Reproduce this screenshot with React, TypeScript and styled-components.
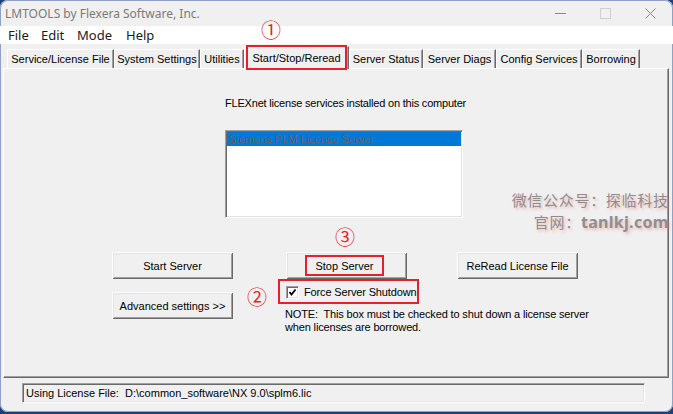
import React from "react";
import styled, { createGlobalStyle } from "styled-components";

const Global = createGlobalStyle`
  html, body { margin: 0; padding: 0; background: #1d3f7a; }
  body {
    width: 673px; height: 414px; overflow: hidden;
    font-family: "Liberation Sans", Arial, sans-serif;
  }
`;

const Window = styled.div`
  position: relative;
  width: 673px;
  height: 412px;
  box-sizing: border-box;
  background: #f0f0f0;
  border-radius: 8px;
  box-shadow: inset 0 0 0 1px #8ea2c4;
  overflow: hidden;
  display: flex;
  flex-direction: column;
  font-family: "Liberation Sans", Arial, sans-serif;
  font-size: 11px;
  color: #000;
`;

const TitleBar = styled.div`
  height: 26px;
  display: flex;
  align-items: center;
  padding-left: 5px;
  font-family: "Noto Sans", sans-serif;
  font-size: 12px;
  color: #7a7a7a;
`;

const TitleText = styled.span`
  flex: 1;
`;

const Controls = styled.div`
  display: flex;
  align-self: stretch;
`;

const ControlBtn = styled.div`
  width: 45px;
  display: flex;
  align-items: center;
  justify-content: center;
`;

const MenuBar = styled.div`
  height: 18px;
  background: #fff;
  display: flex;
  align-items: center;
  padding-left: 2px;
  font-family: "Noto Sans", sans-serif;
  font-size: 13px;
  color: #1a1a1a;
`;

const MenuItem = styled.span<{ $w: number }>`
  width: ${(p) => p.$w}px;
  padding-left: 6px;
  box-sizing: border-box;
`;

const TabRow = styled.div`
  height: 24px;
  display: flex;
  align-items: flex-end;
  padding-left: 7px;
  position: relative;
  z-index: 2;
`;

const Tab = styled.div<{ $w: number; $active?: boolean }>`
  position: relative;
  box-sizing: border-box;
  width: ${(p) => p.$w}px;
  height: ${(p) => (p.$active ? 23 : 19)}px;
  margin-bottom: ${(p) => (p.$active ? -1 : 0)}px;
  display: flex;
  align-items: center;
  justify-content: center;
  white-space: nowrap;
  background: #f0f0f0;
  border-top: 1px solid #fff;
  border-left: 1px solid #fff;
  border-right: 1px solid #696969;
  box-shadow: inset -1px 0 0 #a0a0a0;
  ${(p) =>
    p.$active &&
    `
    &::after {
      content: "";
      position: absolute;
      left: 1px; right: 1px; top: -2px; bottom: -1px;
      border: 2px solid #e4202b;
    }
  `}
`;

const Panel = styled.div`
  position: relative;
  margin-left: 3px;
  width: 666px;
  height: 310px;
  box-sizing: border-box;
  border-top: 1px solid #fff;
  border-left: 1px solid #fff;
  border-right: 1px solid #696969;
  border-bottom: 1px solid #696969;
  box-shadow: inset -1px -1px 0 #a0a0a0;
  padding-top: 28px;
`;

const ServiceBlock = styled.div`
  margin-left: 221px;
  display: flex;
  flex-direction: column;
`;

const Label = styled.div`
  line-height: 13px;
  height: 13px;
  letter-spacing: -0.2px;
  white-space: nowrap;
`;

const ListBox = styled.div`
  margin-top: 20px;
  width: 238px;
  height: 88px;
  box-sizing: border-box;
  background: #fff;
  border-top: 1px solid #a0a0a0;
  border-left: 1px solid #a0a0a0;
  border-right: 1px solid #fff;
  border-bottom: 1px solid #fff;
  box-shadow: inset 1px 1px 0 #696969, inset -1px -1px 0 #e3e3e3;
  padding: 1px 1px 0 1px;
`;

const ListItem = styled.div<{ $selected?: boolean }>`
  height: 14px;
  line-height: 14px;
  padding-left: 2px;
  background: ${(p) => (p.$selected ? "#0078d7" : "transparent")};
  color: ${(p) => (p.$selected ? "#7b5d40" : "#000")};
  white-space: nowrap;
`;

const ButtonGrid = styled.div`
  margin-top: 34px;
  margin-left: 108px;
  display: grid;
  grid-template-columns: 174px 171px 121px;
  grid-template-rows: 27px auto;
`;

const Button = styled.div<{ $mt?: number }>`
  width: 121px;
  height: 27px;
  margin-top: ${(p) => p.$mt ?? 0}px;
  box-sizing: border-box;
  display: flex;
  align-items: center;
  justify-content: center;
  background: #f0f0f0;
  box-shadow: inset 1px 1px 0 #fff, inset -1px -1px 0 #696969,
    inset 2px 2px 0 #e3e3e3, inset -2px -2px 0 #a0a0a0;
  white-space: nowrap;
`;

const Highlight = styled.span`
  box-sizing: border-box;
  height: 21px;
  display: inline-flex;
  align-items: center;
  padding: 0 8px;
  margin-left: -4px;
  border: 2px solid #e4202b;
`;

const OptionCell = styled.div`
  grid-column: 2 / span 2;
  display: flex;
  flex-direction: column;
`;

const CheckRow = styled.div`
  margin-top: 2px;
  margin-left: -6px;
  width: 137px;
  height: 21px;
  box-sizing: border-box;
  padding: 1px 0 0 6px;
  display: flex;
  align-items: center;
  gap: 5px;
  outline: 2px solid #e4202b;
  white-space: nowrap;
  letter-spacing: -0.15px;
`;

const CheckBox = styled.div`
  width: 13px;
  height: 13px;
  box-sizing: border-box;
  background: #fff;
  border-top: 1px solid #a0a0a0;
  border-left: 1px solid #a0a0a0;
  border-right: 1px solid #fff;
  border-bottom: 1px solid #fff;
  box-shadow: inset 1px 1px 0 #696969, inset -1px -1px 0 #e3e3e3;
  display: flex;
  align-items: center;
  justify-content: center;
`;

const Note = styled.div`
  margin-top: 6px;
  margin-left: -1px;
  line-height: 13px;
  white-space: pre;
  letter-spacing: -0.15px;
`;

const StatusField = styled.div`
  margin: 5px 0 0 22px;
  width: 623px;
  height: 20px;
  box-sizing: border-box;
  border-top: 1px solid #a0a0a0;
  border-left: 1px solid #a0a0a0;
  border-right: 1px solid #fff;
  border-bottom: 1px solid #fff;
  box-shadow: inset 1px 1px 0 #696969, inset -1px -1px 0 #e3e3e3;
  display: flex;
  align-items: center;
  padding-left: 3px;
  white-space: pre;
`;

const Watermark = styled.div`
  position: absolute;
  right: 5px;
  top: 189px;
  display: flex;
  flex-direction: column;
  align-items: flex-end;
  font-family: "Noto Sans CJK SC", "Noto Sans", sans-serif;
  font-size: 15px;
  letter-spacing: 0.7px;
  color: #8e8e8e;
  text-shadow: 2px 2px 3px rgba(240, 110, 110, 0.45);
  z-index: 3;
`;

const WatermarkLine = styled.div`
  height: 22px;
  line-height: 22px;
  white-space: nowrap;
  margin-right: -0.7px;
`;

const Bold = styled.span`
  font-family: "Noto Sans", sans-serif;
  font-weight: 700;
  font-size: 16px;
  letter-spacing: 0.3px;
`;

const Marker = styled.div<{ $x: number; $y: number }>`
  position: absolute;
  left: ${(p) => p.$x - 11}px;
  top: ${(p) => p.$y - 11}px;
  width: 22px;
  height: 22px;
  display: flex;
  align-items: center;
  justify-content: center;
  font-family: "Noto Sans CJK SC", sans-serif;
  font-size: 20px;
  line-height: 1;
  color: #e4202b;
  z-index: 4;
`;

const tabs: { label: string; w: number; active?: boolean }[] = [
  { label: "Service/License File", w: 107 },
  { label: "System Settings", w: 86 },
  { label: "Utilities", w: 44 },
  { label: "Start/Stop/Reread", w: 105, active: true },
  { label: "Server Status", w: 74 },
  { label: "Server Diags", w: 73 },
  { label: "Config Services", w: 86 },
  { label: "Borrowing", w: 58 },
];

const menus: { label: string; w: number }[] = [
  { label: "File", w: 33 },
  { label: "Edit", w: 36 },
  { label: "Mode", w: 49 },
  { label: "Help", w: 40 },
];

export default function App() {
  return (
    <>
      <Global />
      <Window>
        <TitleBar>
          <TitleText>LMTOOLS by Flexera Software, Inc.</TitleText>
          <Controls>
            <ControlBtn>
              <svg width="11" height="11" viewBox="0 0 11 11">
                <line x1="0" y1="5.5" x2="11" y2="5.5" stroke="#8a8a8a" strokeWidth="1" />
              </svg>
            </ControlBtn>
            <ControlBtn>
              <svg width="11" height="11" viewBox="0 0 11 11">
                <rect x="0.5" y="0.5" width="10" height="10" fill="none" stroke="#cfcfcf" strokeWidth="1" />
              </svg>
            </ControlBtn>
            <ControlBtn>
              <svg width="11" height="11" viewBox="0 0 11 11">
                <path d="M0.5 0.5 L10.5 10.5 M10.5 0.5 L0.5 10.5" stroke="#8a8a8a" strokeWidth="1" />
              </svg>
            </ControlBtn>
          </Controls>
        </TitleBar>
        <MenuBar>
          {menus.map((m) => (
            <MenuItem key={m.label} $w={m.w}>
              {m.label}
            </MenuItem>
          ))}
        </MenuBar>
        <TabRow>
          {tabs.map((t) => (
            <Tab key={t.label} $w={t.w} $active={t.active}>
              {t.label}
            </Tab>
          ))}
        </TabRow>
        <Panel>
          <ServiceBlock>
            <Label>FLEXnet license services installed on this computer</Label>
            <ListBox>
              <ListItem $selected>Siemens PLM License Server</ListItem>
            </ListBox>
          </ServiceBlock>
          <ButtonGrid>
            <Button>Start Server</Button>
            <Button>
              <Highlight>Stop Server</Highlight>
            </Button>
            <Button>ReRead License File</Button>
            <Button $mt={13}>Advanced settings &gt;&gt;</Button>
            <OptionCell>
              <CheckRow>
                <CheckBox>
                  <svg width="9" height="9" viewBox="0 0 9 9">
                    <polyline points="1.5,4 3.5,6.5 7.5,1.5" fill="none" stroke="#000" strokeWidth="1.8" />
                  </svg>
                </CheckBox>
                Force Server Shutdown
              </CheckRow>
              <Note>
                {"NOTE:  This box must be checked to shut down a license server\nwhen licenses are borrowed."}
              </Note>
            </OptionCell>
          </ButtonGrid>
        </Panel>
        <StatusField>{"Using License File:  D:\\common_software\\NX 9.0\\splm6.lic"}</StatusField>
        <Watermark>
          <WatermarkLine>微信公众号：探临科技</WatermarkLine>
          <WatermarkLine>
            官网：<Bold>tanlkj.com</Bold>
          </WatermarkLine>
        </Watermark>
        <Marker $x={271} $y={30}>①</Marker>
        <Marker $x={257} $y={297}>②</Marker>
        <Marker $x={345} $y={237}>③</Marker>
      </Window>
    </>
  );
}
